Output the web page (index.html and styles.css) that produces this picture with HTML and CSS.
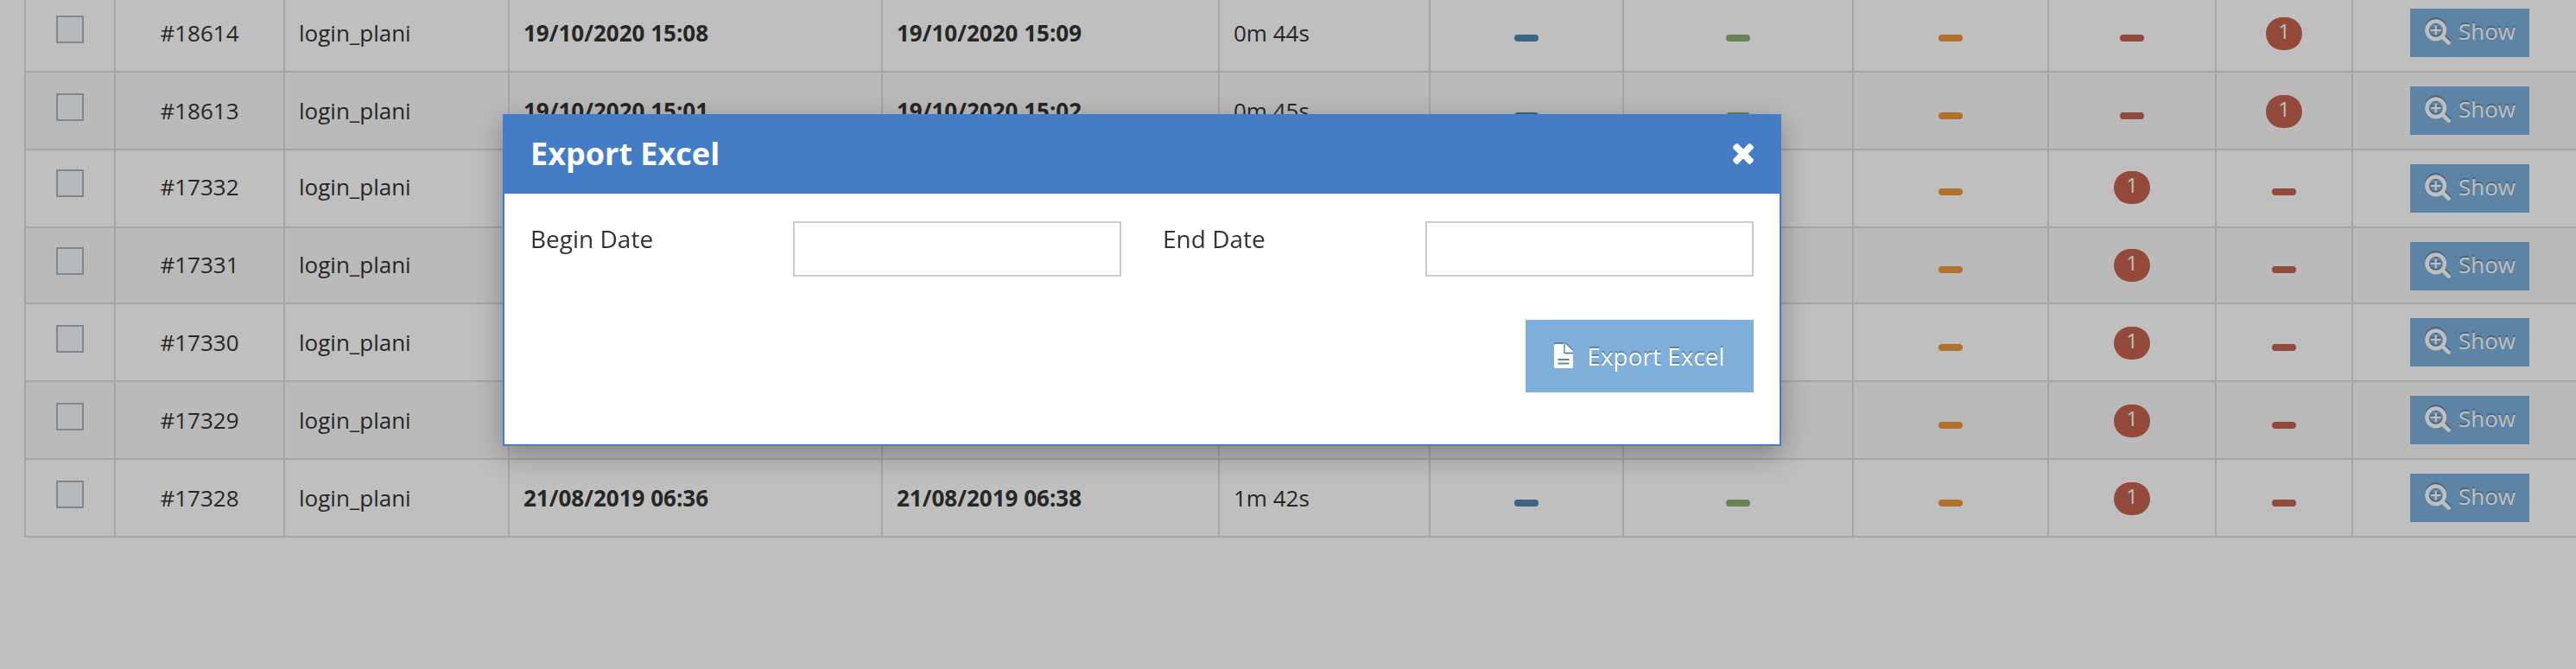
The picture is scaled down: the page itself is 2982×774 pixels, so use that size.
FILE: index.html
```html
<!DOCTYPE html>
<html lang="en">
<head>
<meta charset="utf-8">
<title>Export Excel</title>
<link rel="stylesheet" href="styles.css">
</head>
<body>
<svg class="sprite" aria-hidden="true">
  <symbol id="zoom-in" viewBox="0 0 1792 1792"><path d="M1088 800v64q0 13-9.5 22.5t-22.5 9.5h-224v224q0 13-9.5 22.5t-22.5 9.5h-64q-13 0-22.5-9.5t-9.5-22.5v-224h-224q-13 0-22.5-9.5t-9.5-22.5v-64q0-13 9.5-22.5t22.5-9.5h224v-224q0-13 9.5-22.5t22.5-9.5h64q13 0 22.5 9.5t9.5 22.5v224h224q13 0 22.5 9.5t9.5 22.5zm128 32q0-185-131.5-316.5t-316.5-131.5-316.5 131.5-131.5 316.5 131.5 316.5 316.5 131.5 316.5-131.5 131.5-316.5zm512 832q0 53-37.5 90.5t-90.5 37.5q-54 0-90-38l-343-342q-179 124-399 124-143 0-273.5-55.5t-225-150-150-225-55.5-273.5 55.5-273.5 150-225 225-150 273.5-55.5 273.5 55.5 225 150 150 225 55.5 273.5q0 220-124 399l343 343q37 37 37 90z"/></symbol>
</svg>
<main class="page">
  <table class="grid">
    <colgroup><col class="c-check"><col class="c-id"><col class="c-user"><col class="c-begin"><col class="c-end"><col class="c-time"><col class="c-blue"><col class="c-green"><col class="c-orange"><col class="c-red"><col class="c-red2"><col></colgroup>
    <tbody id="rows"></tbody>
  </table>
</main>
<div class="overlay"></div>
<section class="dialog" role="dialog" aria-labelledby="dialog-title">
  <header class="dialog-head">
    <h2 class="dialog-title" id="dialog-title">Export Excel</h2>
    <button class="close" type="button" aria-label="Close"><svg viewBox="302 366 1188 1188"><path d="M1490 1322q0 40-28 68l-136 136q-28 28-68 28t-68-28l-294-294-294 294q-28 28-68 28t-68-28l-136-136q-28-28-28-68t28-68l294-294-294-294q-28-28-28-68t28-68l136-136q28-28 68-28t68 28l294 294 294-294q28-28 68-28t68 28l136 136q28 28 28 68t-28 68l-294 294 294 294q28 28 28 68z"/></svg></button>
  </header>
  <form class="dialog-body">
    <div class="fields">
      <div class="field"><label for="begin">Begin Date</label><input id="begin" type="text"></div>
      <div class="field"><label for="end">End Date</label><input id="end" type="text"></div>
    </div>
    <button class="export" type="button"><svg viewBox="0 0 22 28"><path fill-rule="evenodd" d="M1.500 0H11V9.500Q11 11.500 13 11.500H22V26.500Q22 28 20.500 28H1.500Q0 28 0 26.500V1.500Q0 0 1.500 0ZM4.500 17V19H17.500V17ZM4.500 21.500V23.500H17.500V21.500ZM13 0Q14 .4 14.700 1L21 7.500Q21.700 8.300 22 9.500H13Z"/></svg>Export Excel</button>
  </form>
</section>
<script src="rows.js"></script>
</body>
</html>
```
FILE: styles.css
```css
* { box-sizing: border-box; }
body {
  margin: 0;
  background: #fff;
  color: #333;
  font: 26px/40px "Open Sans", "Noto Sans", sans-serif;
  overflow: hidden;
}
svg { fill: currentColor; }
.sprite { display: none; }
.page { padding-left: 28px; }

/* The list is scrolled: its first row starts above the window. */
.grid {
  width: calc(100% + 14px);
  margin-top: -8px;
  border-collapse: collapse;
  table-layout: fixed;
}
.c-check { width: 104px; }
.c-id { width: 196px; }
.c-user { width: 260px; }
.c-begin { width: 432px; }
.c-end { width: 390px; }
.c-time { width: 244px; }
.c-blue { width: 224px; }
.c-green { width: 266px; }
.c-orange { width: 226px; }
.c-red { width: 194px; }
.c-red2 { width: 158px; }
.grid td {
  height: 90px;
  padding: 24px 16px 22px;
  border: 2px solid #ddd;
  vertical-align: top;
}
.grid tr:nth-child(even) { background: #f9f9f9; }
.grid tr:nth-child(3) td, .grid tr:nth-child(4) td { padding-top: 22px; }
.grid tr:nth-child(4) td { height: 88px; }
.grid .center { text-align: center; }
.grid .bold { font-weight: 700; }
.grid tr .action, .grid tr:nth-child(n) .action { padding: 16px 0 14px; }
.check {
  appearance: none;
  display: block;
  width: 32px;
  height: 32px;
  margin: 0 auto;
  border: 2px solid #adb5bb;
  background: #f4f8fc;
}
.badge {
  display: block;
  width: 42px;
  height: 38px;
  margin: 2px auto 0;
  border-radius: 19px;
  color: #fff;
  font-size: 24px;
  line-height: 32px;
}
.badge:empty {
  width: 28px;
  height: 8px;
  margin-top: 22px;
  border-radius: 4px;
}
.blue { background: #5187af; }
.green { background: #88b071; }
.orange { background: #eb9938; }
.red { background: #c5634f; }
.show, .export {
  display: flex;
  align-items: center;
  justify-content: center;
  border: 0;
  background: #7eb1dd;
  color: #fff;
  font-family: inherit;
  text-shadow: 0 -2px 0 rgba(0, 0, 0, .25);
}
.show svg, .export svg { filter: drop-shadow(0 -2px 0 rgba(0, 0, 0, .25)); }
.show {
  width: 138px;
  height: 56px;
  margin: 0 auto;
  padding: 0 0 4px;
  gap: 8px;
  font-size: 26px;
}
.show svg { width: 32px; height: 32px; }

.overlay { position: fixed; inset: 0; background: rgba(0, 0, 0, .25); }
.dialog {
  position: absolute;
  top: 132px;
  left: 582px;
  width: 1480px;
  border: 2px solid #447cc5;
  background: #fff;
  box-shadow: 0 10px 30px rgba(0, 0, 0, .3);
  font-size: 28px;
}
.dialog-head {
  display: flex;
  align-items: center;
  justify-content: space-between;
  height: 92px;
  padding: 0 30px 2px;
  border-bottom: 2px solid #eee;
  background: #447cc5;
  color: #fff;
}
.dialog-title { margin: 0; font-size: 36px; line-height: 48px; }
.close { display: flex; padding: 0; border: 0; background: none; color: #fff; }
.close svg { width: 24px; height: 24px; }
.dialog-body { padding: 30px 30px 60px; }
.fields { display: grid; grid-template-columns: 1fr 1fr; gap: 48px; }
.field { display: grid; grid-template-columns: 304px 1fr; align-items: start; }
.field input {
  width: 100%;
  height: 64px;
  padding: 0 8px;
  border: 2px solid #ccc;
  background: #fff;
  font: inherit;
}
.export {
  width: 264px;
  height: 84px;
  margin: 50px 0 0 auto;
  padding: 0;
  gap: 16px;
  background: #7fb0dc;
  font-size: 28px;
}
.export svg { width: 22px; height: 28px; }
```
FILE: rows.js
```js
const rows = [
  ["#18614", "19/10/2020 15:08", "19/10/2020 15:09", "0m 44s", "", "1"],
  ["#18613", "19/10/2020 15:01", "19/10/2020 15:02", "0m 45s", "", "1"],
  ["#17332", "", "", "", "1", ""],
  ["#17331", "", "", "", "1", ""],
  ["#17330", "", "", "", "1", ""],
  ["#17329", "", "", "", "1", ""],
  ["#17328", "21/08/2019 06:36", "21/08/2019 06:38", "1m 42s", "1", ""]
];
const badge = (color, text = "") => `<td><span class="badge center ${color}">${text}</span></td>`;
document.getElementById("rows").innerHTML = rows.map(([id, begin, end, time, first, second]) => `
  <tr>
    <td><input class="check" type="checkbox" aria-label="Select ${id}"></td>
    <td class="center">${id}</td>
    <td>login_plani</td>
    <td class="bold">${begin}</td>
    <td class="bold">${end}</td>
    <td>${time}</td>
    ${badge("blue")}${badge("green")}${badge("orange")}${badge("red", first)}${badge("red", second)}
    <td class="action"><button class="show" type="button"><svg><use href="#zoom-in"/></svg>Show</button></td>
  </tr>`).join("");
```
